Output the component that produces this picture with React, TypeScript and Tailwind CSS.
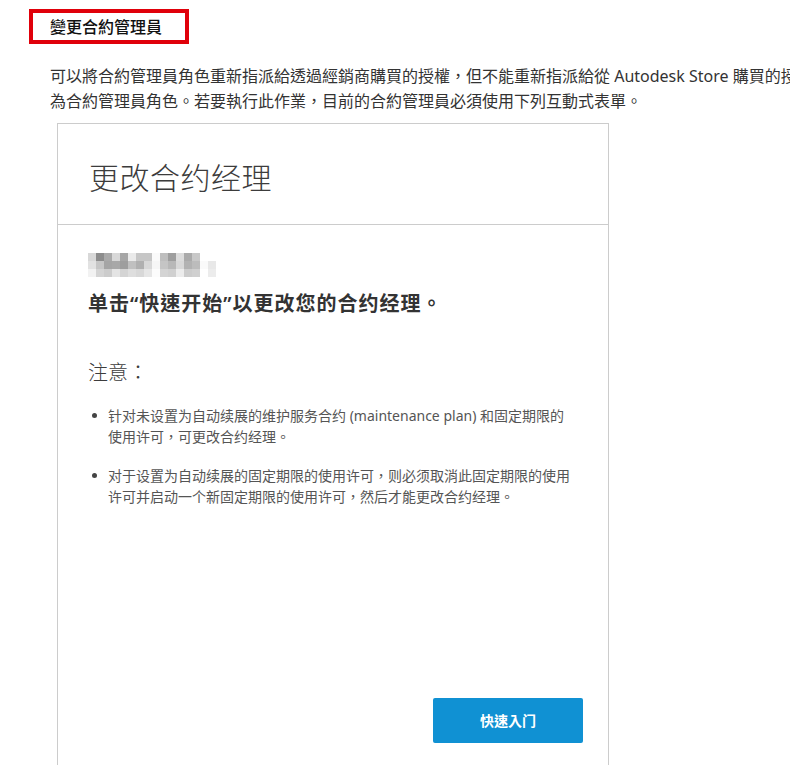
const BLUR_ROWS: string[][] = [
  ["#d8d8d8", "#8c8c8c", "#a9a9a9", "#d8d8d8", "#a6a6a6", "#eaeaea", "#c6c6c6", "#c6c6c6", "#fafafa", "#bebebe", "#9e9e9e", "#dcdcdc", "#aaaaaa", "#c8c8c8", "#ffffff", "#ffffff"],
  ["#e2e2e2", "#c6c6c6", "#a5a5a5", "#a8a8a8", "#9e9e9e", "#c0c0c0", "#b0b0b0", "#d8d8d8", "#f6f6f6", "#c5c5c5", "#b8b8b8", "#d8d8d8", "#b2b2b2", "#bcbcbc", "#fafafa", "#e8e8e8"],
  ["#f2f2f2", "#d4d4d4", "#cccccc", "#e4e4e4", "#d4d4d4", "#dedede", "#d8d8d8", "#e6e6e6", "#fcfcfc", "#d4d4d4", "#d0d0d0", "#ececec", "#cccccc", "#d0d0d0", "#ffffff", "#ececec"],
];

const NOTES = [
  "针对未设置为自动续展的维护服务合约 (maintenance plan) 和固定期限的使用许可，可更改合约经理。",
  "对于设置为自动续展的固定期限的使用许可，则必须取消此固定期限的使用许可并启动一个新固定期限的使用许可，然后才能更改合约经理。",
];

function BlurredName() {
  // pixelated account name, redacted in the original
  return (
    <div className="flex flex-col w-[128px]">
      {BLUR_ROWS.map((row, r) => (
        <div key={r} className="flex h-[8px]">
          {row.map((c, i) => (
            <div key={i} className="w-[8px] h-[8px]" style={{ backgroundColor: c }} />
          ))}
        </div>
      ))}
    </div>
  );
}

function ContractCard() {
  return (
    <div className="ml-[57px] w-[552px] border border-[#cccccc] border-b-0 bg-white">
      <div className="h-[101px] flex items-center pt-[8px] px-[31px] border-b border-[#cccccc]">
        <h2 className="text-[30px] font-light text-[#3c3c3c] leading-none tracking-[0.5px]">更改合约经理</h2>
      </div>
      <div className="pl-[30px] pr-[36px] pt-[28px]">
        <BlurredName />
        <p className="mt-[14px] text-[20px] font-semibold text-[#333333] leading-[26px] tracking-[1px]">
          单击“快速开始”以更改您的合约经理。
        </p>
        <p className="mt-[42px] text-[20px] font-light text-[#3c3c3c] leading-[28px]">注意：</p>
        <ul className="mt-[18px] space-y-[18px]">
          {NOTES.map((n, i) => (
            <li key={i} className="flex text-[14px] text-[#555555] leading-[21px]">
              <span className="w-[20px] shrink-0 pl-[4px] pt-[8px]">
                <span className="block w-[5px] h-[5px] rounded-full bg-[#444444]" />
              </span>
              <span>{n}</span>
            </li>
          ))}
        </ul>
        <div className="flex justify-end pt-[191px] pb-[22px]">
          <button className="w-[150px] h-[45px] bg-[#1091d3] rounded-[2px] text-white text-[14px] font-bold mr-[-11px]">
            快速入门
          </button>
        </div>
      </div>
    </div>
  );
}

export default function App() {
  return (
    <div
      lang="zh-Hant"
      className="w-[790px] h-[766px] overflow-hidden bg-white font-['Noto_Sans','Noto_Sans_CJK_TC',sans-serif] text-[#222222]"
    >
      <div className="pt-[9px] pl-[29px]">
        <div className="w-[160px] h-[35px] border-[4px] border-[#e0000a] flex items-center pl-[17px]">
          <span className="text-[16px] font-medium text-[#111111]">變更合約管理員</span>
        </div>
      </div>
      <p className="mt-[20px] ml-[50px] w-[900px] whitespace-nowrap text-[16px] leading-[25px] text-[#333333]">
        可以將合約管理員角色重新指派給透過經銷商購買的授權，但不能重新指派給從 Autodesk Store 購買的授權指派新使用者
        <br />
        為合約管理員角色。若要執行此作業，目前的合約管理員必須使用下列互動式表單。
      </p>
      <div className="mt-[9px]">
        <ContractCard />
      </div>
    </div>
  );
}
